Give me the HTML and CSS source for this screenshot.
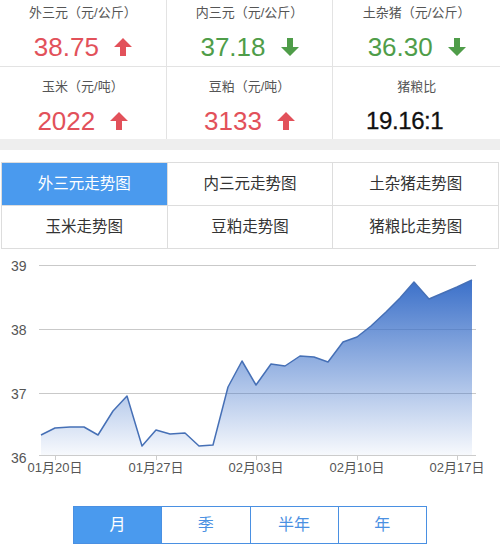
FILE: index.html
```html
<!DOCTYPE html>
<html lang="zh-CN">
<head>
  <meta charset="UTF-8" />
  <meta name="viewport" content="width=device-width, initial-scale=1.0"/>
  <title>猪价行情</title>
  <link rel="stylesheet" href="styles.css">
</head>
<body>
  <!-- price summary -->
  <div class="stats">
    <div class="stat">
      <p class="stat-label">外三元（元/公斤）</p>
      <p class="stat-value up">38.75
        <svg class="arrow" viewBox="0 0 18 18"><path d="M9 0 L18 9 L12 9 L12 18 L6 18 L6 9 L0 9 Z"/></svg>
      </p>
    </div>
    <div class="stat">
      <p class="stat-label">内三元（元/公斤）</p>
      <p class="stat-value down">37.18
        <svg class="arrow" viewBox="0 0 18 18"><path d="M9 18 L18 9 L12 9 L12 0 L6 0 L6 9 L0 9 Z"/></svg>
      </p>
    </div>
    <div class="stat">
      <p class="stat-label">土杂猪（元/公斤）</p>
      <p class="stat-value down">36.30
        <svg class="arrow" viewBox="0 0 18 18"><path d="M9 18 L18 9 L12 9 L12 0 L6 0 L6 9 L0 9 Z"/></svg>
      </p>
    </div>
    <div class="stat">
      <p class="stat-label">玉米（元/吨）</p>
      <p class="stat-value up">2022
        <svg class="arrow" viewBox="0 0 18 18"><path d="M9 0 L18 9 L12 9 L12 18 L6 18 L6 9 L0 9 Z"/></svg>
      </p>
    </div>
    <div class="stat">
      <p class="stat-label">豆粕（元/吨）</p>
      <p class="stat-value up">3133
        <svg class="arrow" viewBox="0 0 18 18"><path d="M9 0 L18 9 L12 9 L12 18 L6 18 L6 9 L0 9 Z"/></svg>
      </p>
    </div>
    <div class="stat">
      <p class="stat-label">猪粮比</p>
      <p class="stat-value ratio">19.16:1</p>
    </div>
  </div>

  <!-- chart switch -->
  <div class="tabs">
    <div class="tab active">外三元走势图</div>
    <div class="tab">内三元走势图</div>
    <div class="tab">土杂猪走势图</div>
    <div class="tab">玉米走势图</div>
    <div class="tab">豆粕走势图</div>
    <div class="tab">猪粮比走势图</div>
  </div>

  <!-- trend chart -->
  <div class="chart">
    <svg width="500" height="245" viewBox="0 0 500 245">
      <defs>
        <linearGradient id="area" x1="0" y1="30" x2="0" y2="205" gradientUnits="userSpaceOnUse">
          <stop offset="0" stop-color="#3b70c9"/>
          <stop offset="1" stop-color="#3b70c9" stop-opacity="0.04"/>
        </linearGradient>
      </defs>
      <g class="grid">
        <line x1="39" y1="15.5" x2="476" y2="15.5"/>
        <line x1="39" y1="79.5" x2="476" y2="79.5"/>
        <line x1="39" y1="143.5" x2="476" y2="143.5"/>
      </g>
      <path class="area" d="M41,185 L55,178 L70,177 L84,177 L98,185 L113,161 L127,146 L142,196 L156,180 L170,184 L185,183 L199,196 L213,195 L228,137 L242,111 L256,135 L271,114 L285,116 L300,106 L314,107 L328,112 L343,92 L357,87 L371,76 L386,62 L400,48 L414,32 L429,49 L443,43 L457,37 L472,30 L472,205 L41,205 Z"/>
      <polyline class="line" points="41,185 55,178 70,177 84,177 98,185 113,161 127,146 142,196 156,180 170,184 185,183 199,196 213,195 228,137 242,111 256,135 271,114 285,116 300,106 314,107 328,112 343,92 357,87 371,76 386,62 400,48 414,32 429,49 443,43 457,37 472,30"/>
      <g class="axis">
        <line x1="39" y1="205.5" x2="476" y2="205.5"/>
        <line x1="55.5" y1="205" x2="55.5" y2="210"/>
        <line x1="156.5" y1="205" x2="156.5" y2="210"/>
        <line x1="256.5" y1="205" x2="256.5" y2="210"/>
        <line x1="357.5" y1="205" x2="357.5" y2="210"/>
        <line x1="457.5" y1="205" x2="457.5" y2="210"/>
      </g>
      <g class="y-labels">
        <text x="11" y="21">39</text>
        <text x="11" y="85">38</text>
        <text x="11" y="149">37</text>
        <text x="11" y="213">36</text>
      </g>
      <g class="x-labels">
        <text x="55" y="222">01月20日</text>
        <text x="156" y="222">01月27日</text>
        <text x="256" y="222">02月03日</text>
        <text x="357" y="222">02月10日</text>
        <text x="457" y="222">02月17日</text>
      </g>
    </svg>
  </div>

  <!-- range switch -->
  <div class="range">
    <div class="range-item active">月</div>
    <div class="range-item">季</div>
    <div class="range-item">半年</div>
    <div class="range-item">年</div>
  </div>
</body>
</html>
```

FILE: styles.css
```css
body {
  margin: 0;
  font-family: "Liberation Sans", "Noto Sans CJK SC", sans-serif;
  background: white;
  color: #333;
}

/* price summary */
.stats {
  display: grid;
  grid-template-columns: repeat(3, 1fr);
  margin-top: -7px;
  border-bottom: 11px solid #eeeeee;
}

.stat {
  padding: 11px 0 2px;
  text-align: center;
  border-right: 1px solid #e3e3e3;
}

.stat:nth-child(3n) {
  border-right: none;
}

.stat:nth-child(-n+3) {
  border-bottom: 1px solid #e3e3e3;
  padding-bottom: 3px;
}

.stat-label {
  margin: 0;
  font-size: 13px;
  line-height: 18px;
  color: #555;
}

.stat-value {
  margin: 9px 0 0;
  font-size: 26px;
  line-height: 32px;
  display: flex;
  justify-content: center;
  align-items: center;
  gap: 15px;
}

.stat-value.up {
  color: #e2515a;
}

.stat-value.down {
  color: #4f9d49;
}

.stat-value.ratio {
  color: #111;
  font-size: 24px;
  letter-spacing: -0.4px;
  -webkit-text-stroke: 0.3px #111;
  padding-right: 24px;
}

.arrow {
  width: 18px;
  height: 18px;
  fill: currentColor;
}

/* chart switch */
.tabs {
  display: grid;
  grid-template-columns: repeat(3, 1fr);
  gap: 1px;
  margin: 12px 1px 0;
  padding: 1px;
  background: #dddddd;
}

.tab {
  background: white;
  height: 42px;
  line-height: 42px;
  text-align: center;
  font-size: 15.5px;
  color: #333;
}

.tab.active {
  background: #4a9aee;
  color: white;
}

/* trend chart */
.chart {
  margin-top: 1px;
}

.chart svg {
  display: block;
}

.grid line {
  stroke: #c9c9c9;
  stroke-width: 1;
}

.axis line {
  stroke: #cccccc;
  stroke-width: 1;
}

.area {
  fill: url(#area);
}

.line {
  fill: none;
  stroke: #4670b6;
  stroke-width: 1.5;
  stroke-linejoin: round;
}

.y-labels text {
  font-size: 14px;
  fill: #555;
}

.x-labels text {
  font-size: 13px;
  fill: #555;
  text-anchor: middle;
}

/* range switch */
.range {
  display: flex;
  width: 354px;
  margin: 11px auto 0;
  border: 1px solid #4a90e2;
  box-sizing: border-box;
}

.range-item {
  flex: 1;
  height: 36px;
  line-height: 36px;
  text-align: center;
  font-size: 16px;
  color: #4a90e2;
  border-left: 1px solid #4a90e2;
}

.range-item:first-child {
  border-left: none;
}

.range-item.active {
  background: #4a9aee;
  color: white;
}
```
